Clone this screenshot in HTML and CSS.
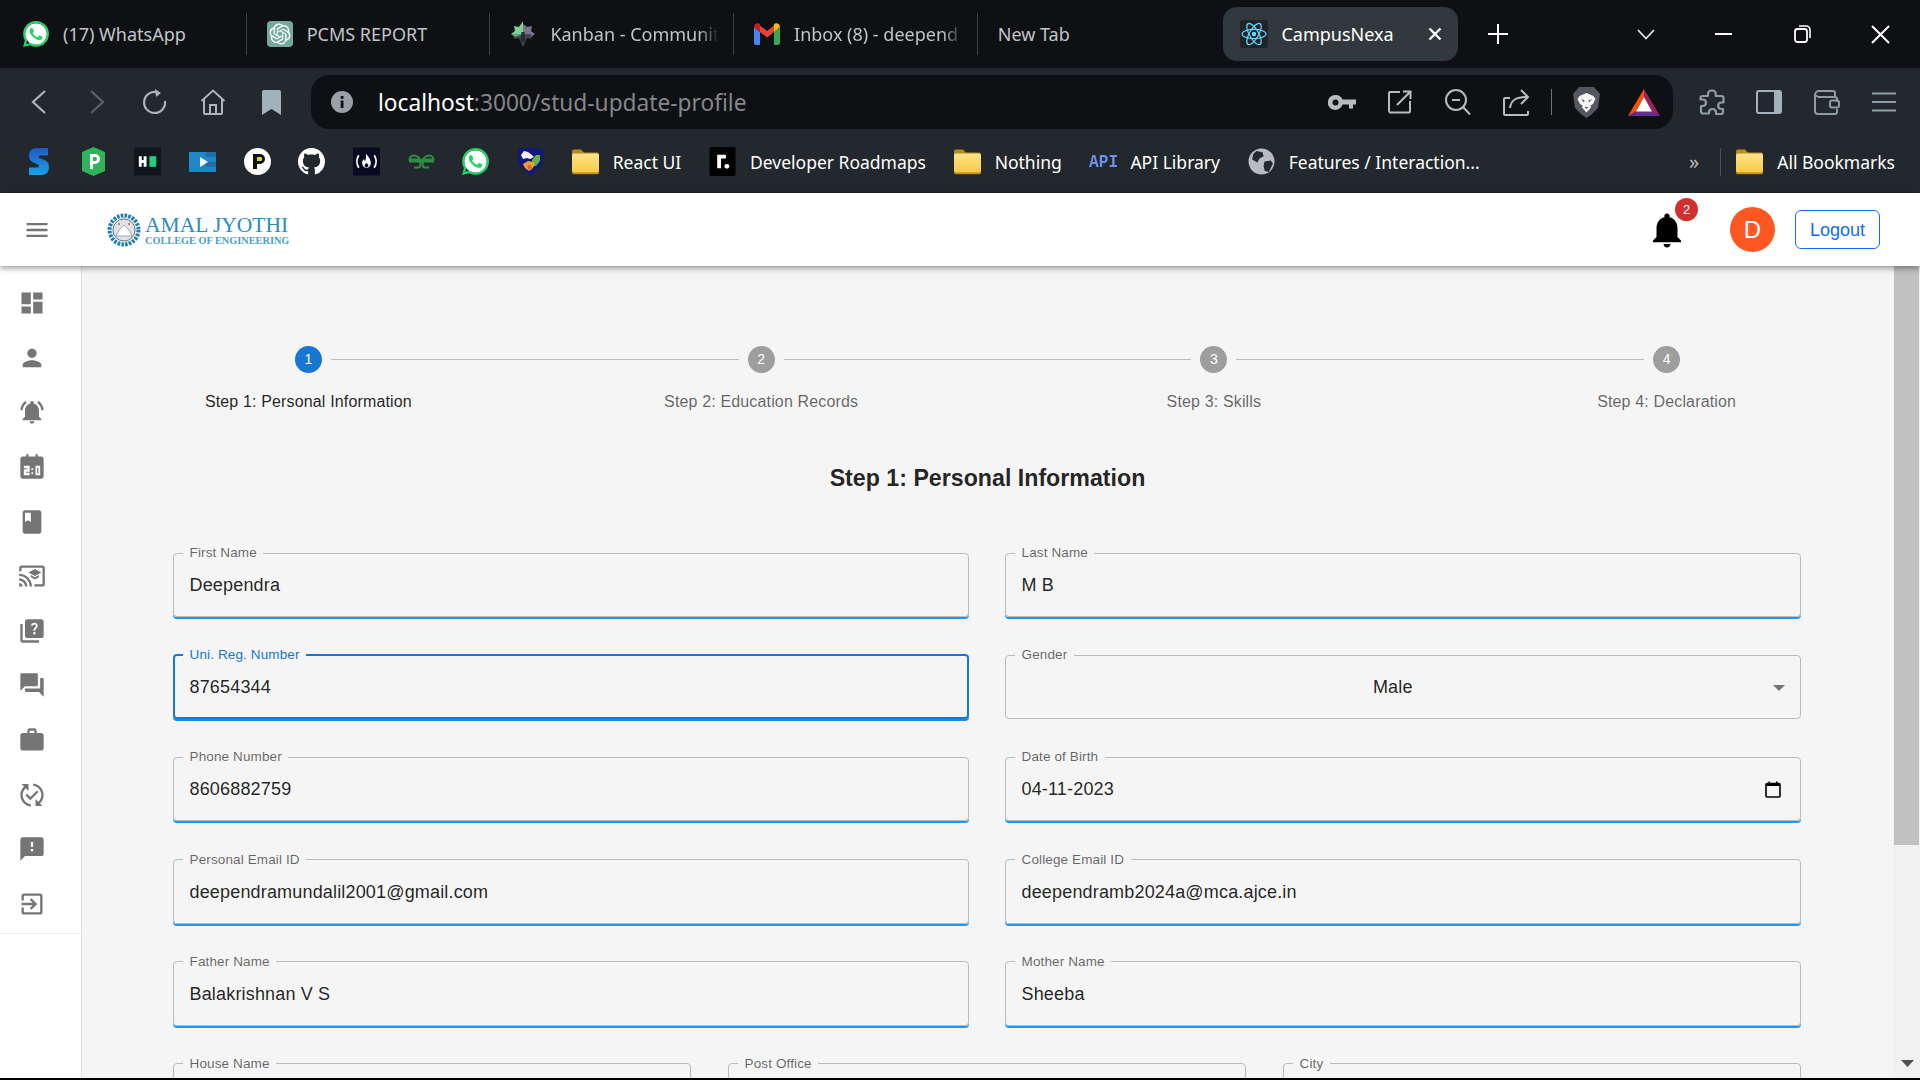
FILE: index.html
```html
<!DOCTYPE html>
<html lang="en">

<head>
    <meta charset="UTF-8">
    <meta name="viewport" content="width=device-width, initial-scale=1.0">
    <title>CampusNexa</title>
    <link rel="stylesheet" href="styles.css">
</head>

<body>

    <!-- browser tabs -->
    <div class="tabstrip">
        <div class="tab">
            <svg class="tab-icon" viewBox="0 0 24 24"><circle cx="12" cy="12" r="10" fill="#fff"/><path fill="#25d366" d="M17.472 14.382c-.297-.149-1.758-.867-2.03-.967-.273-.099-.471-.148-.67.15-.197.297-.767.966-.94 1.164-.173.199-.347.223-.644.075-.297-.15-1.255-.463-2.39-1.475-.883-.788-1.48-1.761-1.653-2.059-.173-.297-.018-.458.13-.606.134-.133.298-.347.446-.52.149-.174.198-.298.298-.497.099-.198.05-.371-.025-.52-.075-.149-.669-1.612-.916-2.207-.242-.579-.487-.5-.669-.51-.173-.008-.371-.01-.57-.01-.198 0-.52.074-.792.372-.272.297-1.04 1.016-1.04 2.479 0 1.462 1.065 2.875 1.213 3.074.149.198 2.096 3.2 5.077 4.487.709.306 1.262.489 1.694.625.712.227 1.36.195 1.871.118.571-.085 1.758-.719 2.006-1.413.248-.694.248-1.289.173-1.413-.074-.124-.272-.198-.57-.347m-5.421 7.403h-.004a9.87 9.87 0 01-5.031-1.378l-.361-.214-3.741.982.998-3.648-.235-.374a9.86 9.86 0 01-1.51-5.26c.001-5.45 4.436-9.884 9.888-9.884 2.64 0 5.122 1.03 6.988 2.898a9.825 9.825 0 012.893 6.994c-.003 5.45-4.437 9.884-9.885 9.884m8.413-18.297A11.815 11.815 0 0012.05 0C5.495 0 .16 5.335.157 11.892c0 2.096.547 4.142 1.588 5.945L.057 24l6.305-1.654a11.882 11.882 0 005.683 1.448h.005c6.554 0 11.89-5.335 11.893-11.893a11.821 11.821 0 00-3.48-8.413z"/></svg>
            <span class="tab-title">(17) WhatsApp</span>
            <i class="tab-sep"></i>
        </div>
        <div class="tab">
            <svg class="tab-icon" viewBox="0 0 26 26"><rect width="26" height="26" rx="4" fill="#74aa9c"/><g transform="translate(2.5 2.5) scale(.875)"><path fill="#fff" d="M22.2819 9.8211a5.9847 5.9847 0 0 0-.5157-4.9108 6.0462 6.0462 0 0 0-6.5098-2.9A6.0651 6.0651 0 0 0 4.9807 4.1818a5.9847 5.9847 0 0 0-3.9977 2.9 6.0462 6.0462 0 0 0 .7427 7.0966 5.98 5.98 0 0 0 .511 4.9107 6.051 6.051 0 0 0 6.5146 2.9001A5.9847 5.9847 0 0 0 13.2599 24a6.0557 6.0557 0 0 0 5.7718-4.2058 5.9894 5.9894 0 0 0 3.9977-2.9001 6.0557 6.0557 0 0 0-.7475-7.0729zm-9.022 12.6081a4.4755 4.4755 0 0 1-2.8764-1.0408l.1419-.0804 4.7783-2.7582a.7948.7948 0 0 0 .3927-.6813v-6.7369l2.02 1.1686a.071.071 0 0 1 .038.052v5.5826a4.504 4.504 0 0 1-4.4945 4.4944zm-9.6607-4.1254a4.4708 4.4708 0 0 1-.5346-3.0137l.142.0852 4.783 2.7582a.7712.7712 0 0 0 .7806 0l5.8428-3.3685v2.3324a.0804.0804 0 0 1-.0332.0615L9.74 19.9502a4.4992 4.4992 0 0 1-6.1408-1.6464zM2.3408 7.8956a4.485 4.485 0 0 1 2.3655-1.9728V11.6a.7664.7664 0 0 0 .3879.6765l5.8144 3.3543-2.0201 1.1685a.0757.0757 0 0 1-.071 0l-4.8303-2.7865A4.504 4.504 0 0 1 2.3408 7.872zm16.5963 3.8558L13.1038 8.364 15.1192 7.2a.0757.0757 0 0 1 .071 0l4.8303 2.7913a4.4944 4.4944 0 0 1-.6765 8.1042v-5.6772a.79.79 0 0 0-.407-.667zm2.0107-3.0231l-.142-.0852-4.7735-2.7818a.7759.7759 0 0 0-.7854 0L9.409 9.2297V6.8974a.0662.0662 0 0 1 .0284-.0615l4.8303-2.7866a4.4992 4.4992 0 0 1 6.6802 4.66zM8.3065 12.863l-2.02-1.1638a.0804.0804 0 0 1-.038-.0567V6.0742a4.4992 4.4992 0 0 1 7.3757-3.4537l-.142.0805L8.704 5.459a.7948.7948 0 0 0-.3927.6813zm1.0976-2.3654l2.602-1.4998 2.6069 1.4998v2.9994l-2.5974 1.4997-2.6067-1.4997Z"/></g></svg>
            <span class="tab-title">PCMS REPORT</span>
            <i class="tab-sep"></i>
        </div>
        <div class="tab">
            <svg class="tab-icon" viewBox="0 0 26 26"><path fill="#7d7590" d="M13 13V3l4 3 5-1-1 5 4 3-4 3z"/><path fill="#45454f" d="M13 13h8l1 5-5-1-4 9-4-9-5 1 1-5z"/><path fill="#7fcf8f" d="M13 13V0l-4 6-5-1 1 5-4 3h12z"/><path fill="#5fa774" d="M1 13l4 3 8-3z"/><path fill="#2b2b35" d="M11.500 11h3l1 9-2.500 2-2.500-2z"/></svg>
            <span class="tab-title tab-fade">Kanban - Communit</span>
            <i class="tab-sep"></i>
        </div>
        <div class="tab">
            <svg class="tab-icon" viewBox="0 0 26 22"><path fill="#4285f4" d="M0 4v16a2 2 0 0 0 2 2h4V9z"/><path fill="#34a853" d="M26 4v16a2 2 0 0 1-2 2h-4V9z"/><path fill="#ea4335" d="M6 9V2.500L13 8l7-5.500V9l-7 5.500z"/><path fill="#c5221f" d="M0 4c0-3 3.500-5 6-3v8z"/><path fill="#fbbc04" d="M26 4c0-3-3.500-5-6-3v8z"/></svg>
            <span class="tab-title tab-fade">Inbox (8) - deepend</span>
            <i class="tab-sep"></i>
        </div>
        <div class="tab">
            <span class="tab-title">New Tab</span>
        </div>
        <div class="tab-active">
            <svg class="tab-icon-big" viewBox="0 0 28 28"><rect width="28" height="28" rx="3" fill="#20232a"/><g fill="none" stroke="#61dafb" stroke-width="1.200"><ellipse cx="14" cy="14" rx="12" ry="4.600"/><ellipse cx="14" cy="14" rx="12" ry="4.600" transform="rotate(60 14 14)"/><ellipse cx="14" cy="14" rx="12" ry="4.600" transform="rotate(120 14 14)"/></g><circle cx="14" cy="14" r="2.200" fill="#61dafb"/></svg>
            <span class="tab-title-active">CampusNexa</span>
            <svg class="tab-close" viewBox="0 0 14 14"><path d="M1.500 1.500l11 11M12.500 1.500l-11 11" stroke="#fff" stroke-width="2.400"/></svg>
        </div>
        <div class="win-plus"><svg width="20" height="20" viewBox="0 0 20 20"><path d="M10 0v20M0 10h20" stroke="#fff" stroke-width="2"/></svg></div>
        <div class="win-chevron"><svg width="18" height="11" viewBox="0 0 18 11"><path d="M1 1l8 8.500L17 1" fill="none" stroke="#e3e3e3" stroke-width="1.800"/></svg></div>
        <div class="win-btn"><svg width="17" height="2" viewBox="0 0 17 2"><path d="M0 1h17" stroke="#fff" stroke-width="2"/></svg></div>
        <div class="win-btn"><svg width="17" height="18" viewBox="0 0 17 18"><rect x="1" y="4" width="12" height="13" rx="2.500" fill="none" stroke="#fff" stroke-width="1.800"/><path d="M5 1h7a4 4 0 0 1 4 4v8" fill="none" stroke="#fff" stroke-width="1.600"/></svg></div>
        <div class="win-btn"><svg width="19" height="19" viewBox="0 0 19 19"><path d="M1 1l17 17M18 1L1 18" stroke="#fff" stroke-width="2"/></svg></div>
    </div>

    <!-- address bar -->
    <div class="toolbar">
        <div class="nav-icons">
            <div class="tb-btn"><svg width="16" height="24" viewBox="0 0 16 24"><path d="M14 1L2 12l12 11" fill="none" stroke="#aab5bc" stroke-width="2.200"/></svg></div>
            <div class="tb-btn"><svg width="16" height="24" viewBox="0 0 16 24"><path d="M2 1l12 11L2 23" fill="none" stroke="#596369" stroke-width="2.200"/></svg></div>
            <div class="tb-btn"><svg width="26" height="26" viewBox="0 0 26 26"><path d="M16 3.500a10.500 10.500 0 1 0 7 8.500" fill="none" stroke="#aab5bc" stroke-width="2.200"/><path d="M13 0l6 4-5 4z" fill="#aab5bc"/></svg></div>
            <div class="tb-btn"><svg width="26" height="26" viewBox="0 0 26 26"><path d="M1.500 12L13 1.500 24.500 12M4 10v14a1 1 0 0 0 1 1h16a1 1 0 0 0 1-1V10M10 25v-9h6v9" fill="none" stroke="#aab5bc" stroke-width="2"/></svg></div>
            <div class="tb-btn"><svg width="19" height="25" viewBox="0 0 19 25"><path d="M2 0h15a2 2 0 0 1 2 2v23l-9.500-6L0 25V2a2 2 0 0 1 2-2z" fill="#a3b1bb"/></svg></div>
        </div>
        <div class="omnibox">
            <svg class="info-icon" viewBox="0 0 22 22"><circle cx="11" cy="11" r="11" fill="#9aa0a6"/><rect x="9.700" y="9.500" width="2.800" height="7.500" fill="#0e1014"/><rect x="9.700" y="5" width="2.800" height="2.800" fill="#0e1014"/></svg>
            <div class="url"><span class="url-host">localhost</span>:3000/stud-update-profile</div>
            <div class="omni-icons">
                <div class="tb-btn"><svg width="28" height="15" viewBox="0 0 28 15"><path fill-rule="evenodd" fill="#b9bcbf" d="M7.500 0a7.500 7.500 0 0 1 7 4.500H28v5h-3v4h-4v-4h-6.500A7.500 7.500 0 1 1 7.500 0zm0 4.500a3 3 0 1 0 0 6 3 3 0 0 0 0-6z"/></svg></div>
                <div class="tb-btn"><svg width="24" height="24" viewBox="0 0 24 24"><path d="M12 2H2a1 1 0 0 0-1 1v18a2 2 0 0 0 1 1.500h19a1 1 0 0 0 1-1V11M9 15L22 2M15 1.500h7.500V9" fill="none" stroke="#b9bcbf" stroke-width="2"/></svg></div>
                <div class="tb-btn"><svg width="26" height="26" viewBox="0 0 26 26"><circle cx="11" cy="11" r="10" fill="none" stroke="#b9bcbf" stroke-width="2"/><path d="M18 18l7 7.500M7 11h8" fill="none" stroke="#b9bcbf" stroke-width="2"/></svg></div>
                <div class="tb-btn"><svg width="27" height="27" viewBox="0 0 27 27"><path d="M7 9H2a1 1 0 0 0-1 1v15a1 1 0 0 0 1 1h22a1 1 0 0 0 1-1v-3M7 19c1-8 6-11 17-11M18 1l7 7-7 7" fill="none" stroke="#b9bcbf" stroke-width="2"/></svg></div>
                <i class="omni-sep"></i>
                <div class="tb-btn"><svg width="27" height="31" viewBox="0 0 27 31"><path fill="#55565f" d="M6 0h15l3 3.500L27 7l-2 14-7 7-4.500 3L9 28l-7-7L0 7l3-3.500z"/><path fill="#f5f5f5" d="M6.500 9L13.500 6l7 3 2 3-2.500 5-2.500 1.500.5 2-4.500 5-4.500-5 .5-2L7 17l-2.500-5z"/><path fill="#55565f" d="M8 12l3.500 1.500-.5 2zM19 12l-3.500 1.500.5 2zM11.500 20h4l-2 2z"/></svg></div>
                <div class="tb-btn"><svg width="32" height="27" viewBox="0 0 32 27"><path fill="#ff5000" d="M16 0L0 27l8-4.500L16 8z"/><path fill="#9e1f63" d="M16 0l16 27-8-4.500L16 8z"/><path fill="#662d91" d="M0 27h32l-8-5H8z"/><path fill="#fff" d="M16 8l8 14.500H8z"/></svg></div>
            </div>
        </div>
        <div class="ext-icons">
            <div class="tb-btn"><svg width="26" height="26" viewBox="0 0 26 26"><path d="M9 5.500C9 3 10.700 1.500 13 1.500s3.800 1.500 3.800 4V7h5.700a2 2 0 0 1 2 2v4.500h-1.800c-2 0-3.500 1.300-3.500 3.200s1.500 3.300 3.500 3.300h1.300v3a2 2 0 0 1-2 2h-5v-1.500c0-2-1.500-3.500-3.500-3.500S10 21 10 23v1.500H4a2 2 0 0 1-2-2V17h1.500c2 0 3.500-1.300 3.500-3.200S5.500 10.500 3.500 10.500H1.500V9a2 2 0 0 1 2-2H9z" fill="none" stroke="#8d9ca6" stroke-width="2.200" stroke-linejoin="round"/></svg></div>
            <div class="tb-btn"><svg width="26" height="24" viewBox="0 0 26 24"><rect x="1" y="1" width="24" height="22" rx="2" fill="none" stroke="#a3b1bb" stroke-width="2"/><rect x="18" y="1" width="7" height="22" fill="#a3b1bb"/></svg></div>
            <div class="tb-btn"><svg width="26" height="25" viewBox="0 0 26 25"><path d="M21 6V3a2 2 0 0 0-2-2H5a4 4 0 0 0-4 4v16a3 3 0 0 0 3 3h17a2 2 0 0 0 2-2v-3M2 5a3 3 0 0 0 3 2h16a2 2 0 0 1 2 2v3" fill="none" stroke="#8d9ca6" stroke-width="2"/><rect x="16" y="10.500" width="9" height="7" rx="2" fill="none" stroke="#8d9ca6" stroke-width="2"/></svg></div>
            <div class="tb-btn"><svg width="24" height="20" viewBox="0 0 24 20"><path d="M0 1.500h24M0 10h24M0 18.500h24" stroke="#8d9ca6" stroke-width="2"/></svg></div>
        </div>
    </div>

    <!-- bookmarks -->
    <div class="bookmarks">
        <div class="bm"><svg class="bm-icon" viewBox="0 0 27 29"><defs><linearGradient id="sFill" x1="0" y1="0" x2="0" y2="1"><stop offset="0" stop-color="#2257c9"/><stop offset="1" stop-color="#19a3e6"/></linearGradient></defs><path fill="url(#sFill)" d="M23 1H11C6 1 4 5 4 9c0 5 4 6.500 8 8 3 1 2.500 3.500-.5 3.500H4V28h12c6 0 8-4 8-8 0-6-4.500-7-8.500-8.500-3-1-2.500-3 .5-3H23z"/></svg></div>
        <div class="bm"><svg class="bm-icon" viewBox="0 0 27 29"><path fill="#2fb45a" d="M13.500 0L25 5v19l-11.500 5L2 24V5z"/><path fill="#fff" d="M10 7h5a5 5 0 0 1 0 10h-2v5h-3zm3 3v4h2a2 2 0 0 0 0-4z"/></svg></div>
        <div class="bm"><svg class="bm-icon" viewBox="0 0 28 29"><rect width="28" height="29" fill="#10151c"/><path fill="#fff" d="M5 9h3v4h2V9h3v11h-3v-4H8v4H5z"/><rect x="16" y="9" width="7" height="11" fill="#1fd176"/></svg></div>
        <div class="bm"><svg class="bm-icon" viewBox="0 0 27 29"><rect y="5" width="27" height="20" fill="#1d87c8"/><rect x="17" y="5" width="10" height="5" fill="#1c6fa8"/><rect x="17" y="15" width="10" height="5" fill="#1c6fa8"/><path fill="#fff" d="M11 10l8 5-8 5z"/></svg></div>
        <div class="bm"><svg class="bm-icon" viewBox="0 0 27 29"><circle cx="13.500" cy="14.500" r="13.500" fill="#fff"/><path fill="#111" d="M9 7h7a5 5 0 0 1 0 10h-3v5H9zm4 3v4h3a2 2 0 0 0 0-4z"/><path fill="#d6d72e" d="M13 10h3a2 2 0 0 1 0 4h-3z"/></svg></div>
        <div class="bm"><svg class="bm-icon" viewBox="0 0 16 16"><path fill="#fff" d="M8 0C3.580 0 0 3.580 0 8c0 3.540 2.290 6.530 5.470 7.590.4.070.55-.17.55-.38 0-.19-.01-.82-.01-1.490-2.010.37-2.530-.49-2.690-.94-.09-.23-.48-.94-.82-1.130-.28-.15-.68-.52-.01-.53.63-.01 1.080.58 1.230.82.72 1.210 1.870.87 2.330.67.07-.52.28-.87.51-1.070-1.780-.2-3.640-.89-3.640-3.950 0-.87.31-1.590.82-2.150-.08-.2-.36-1.020.08-2.120 0 0 .67-.21 2.200.82.64-.18 1.320-.27 2-.27.68 0 1.360.09 2 .27 1.530-1.040 2.200-.82 2.200-.82.44 1.100.16 1.920.08 2.120.51.56.82 1.270.82 2.150 0 3.070-1.870 3.750-3.650 3.950.29.25.54.73.54 1.480 0 1.070-.01 1.930-.01 2.200 0 .21.15.46.55.38A8.013 8.013 0 0016 8c0-4.420-3.580-8-8-8z"/></svg></div>
        <div class="bm"><svg class="bm-icon" viewBox="0 0 28 29"><rect width="28" height="29" fill="#0a0a23"/><path d="M6 8c-2.500 4-2.500 9 0 13M22 8c2.500 4 2.500 9 0 13" fill="none" stroke="#fff" stroke-width="1.800"/><path fill="#fff" fill-rule="evenodd" d="M14 7c3 4 4.500 6 4.500 9 0 3-2 5-4.500 5s-4.500-2-4.500-5c0-2 1-3 2-4 0 2 1 2 1.500 1 .5-2 .5-4 .5-6zm0 9c-1.500 1-2 2-2 3 0 .8 1 1.500 2 1.500s2-.7 2-1.500c0-1-.5-2-2-3z"/></svg></div>
        <div class="bm"><svg class="bm-icon" viewBox="0 0 27 29"><path d="M13.500 14.500C11 9.500 8 8.500 5.500 8.500 3 8.500 1.500 11 1.500 12.500h9c2.500 0 2.500 8 0 8H6M13.500 14.500c2.500-5 5.500-6 8-6 2.500 0 4 2.500 4 4h-9c-2.500 0-2.500 8 0 8H21M1 14.500h25" fill="none" stroke="#2f8d46" stroke-width="2"/></svg></div>
        <div class="bm"><svg class="bm-icon" viewBox="0 0 24 24"><circle cx="12" cy="12" r="10" fill="#fff"/><path fill="#25d366" d="M17.472 14.382c-.297-.149-1.758-.867-2.030-.967-.273-.099-.471-.148-.67.150-.197.297-.767.966-.94 1.164-.173.199-.347.223-.644.075-.297-.15-1.255-.463-2.390-1.475-.883-.788-1.480-1.761-1.653-2.059-.173-.297-.018-.458.130-.606.134-.133.298-.347.446-.52.149-.174.198-.298.298-.497.099-.198.050-.371-.025-.52-.075-.149-.669-1.612-.916-2.207-.242-.579-.487-.5-.669-.51-.173-.008-.371-.010-.57-.010-.198 0-.52.074-.792.372-.272.297-1.040 1.016-1.040 2.479 0 1.462 1.065 2.875 1.213 3.074.149.198 2.096 3.200 5.077 4.487.709.306 1.262.489 1.694.625.712.227 1.360.195 1.871.118.571-.085 1.758-.719 2.006-1.413.248-.694.248-1.289.173-1.413-.074-.124-.272-.198-.57-.347m-5.421 7.403h-.004a9.870 9.870 0 01-5.031-1.378l-.361-.214-3.741.982.998-3.648-.235-.374a9.860 9.860 0 01-1.510-5.260c.001-5.450 4.436-9.884 9.888-9.884 2.640 0 5.122 1.030 6.988 2.898a9.825 9.825 0 012.893 6.994c-.003 5.450-4.437 9.884-9.885 9.884m8.413-18.297A11.815 11.815 0 0012.050 0C5.495 0 .16 5.335.157 11.892c0 2.096.547 4.142 1.588 5.945L.057 24l6.305-1.654a11.882 11.882 0 005.683 1.448h.005c6.554 0 11.890-5.335 11.893-11.893a11.821 11.821 0 00-3.480-8.413z"/></svg></div>
        <div class="bm"><svg class="bm-icon" viewBox="0 0 27 29"><path fill="#10187a" d="M1 2l12.500-1.500L26 2v15L13.500 29 1 17z"/><path fill="#f2f2f2" d="M4 8l3-4 4 1 4 3 2 2-4 2-3-1-4 1z"/><path fill="#5fb548" d="M15 13l4-5 4 0 0 6-4 5-4-1z"/><path fill="#f0a030" d="M6 17l5-3 5 1 2 3-3 4-3 2-4-3z"/><path fill="#e0602f" d="M10 19l4-1 1 3-3 2z"/></svg></div>
        <div class="bm bm-text">
            <svg class="bm-icon" viewBox="0 0 27 26"><use href="#folder"/></svg>
            <span>React UI</span>
        </div>
        <div class="bm bm-text">
            <svg class="bm-icon" viewBox="0 0 27 30"><rect width="27" height="30" rx="2" fill="#000"/><path fill="#fff" d="M8 8h9v4h-5v10H8z"/><circle cx="18" cy="20" r="2.500" fill="#fff"/></svg>
            <span>Developer Roadmaps</span>
        </div>
        <div class="bm bm-text">
            <svg class="bm-icon" viewBox="0 0 27 26"><use href="#folder"/></svg>
            <span>Nothing</span>
        </div>
        <div class="bm bm-text">
            <span class="bm-api">API</span>
            <span>API Library</span>
        </div>
        <div class="bm bm-text">
            <svg class="bm-icon" viewBox="0 0 26 26"><circle cx="13" cy="13" r="12.500" fill="#b8bcc0"/><path fill="#22282d" d="M8 3l6 1 1 4-4 2-2 4-5-3 1-5zM16 13l6-1 2 3-4 8-4-1-1-5z"/></svg>
            <span>Features / Interaction...</span>
        </div>
        <div class="bm-more">»</div>
        <i class="bm-sep"></i>
        <div class="bm bm-text bm-all">
            <svg class="bm-icon" viewBox="0 0 27 26"><use href="#folder"/></svg>
            <span>All Bookmarks</span>
        </div>
    </div>

    <svg class="defs" width="0" height="0">
        <defs>
            <linearGradient id="folderFill" x1="0" y1="0" x2="0" y2="1"><stop offset="0" stop-color="#ffe48a"/><stop offset="1" stop-color="#f7c948"/></linearGradient>
            <symbol id="folder" viewBox="0 0 27 26"><path fill="#b98a1c" d="M0 3a2 2 0 0 1 2-2h7l3 3h13a2 2 0 0 1 2 2v18a2 2 0 0 1-2 2H2a2 2 0 0 1-2-2z"/><rect y="5" width="27" height="19" rx="2" fill="url(#folderFill)"/></symbol>
        </defs>
    </svg>

    <!-- the app -->
    <header class="app-header">
        <svg class="header-menu" viewBox="0 0 24 24"><path d="M3 18h18v-2H3v2zm0-5h18v-2H3v2zm0-7v2h18V6H3z"/></svg>
        <div class="logo">
            <svg class="logo-seal" viewBox="0 0 34 34"><circle cx="17" cy="17" r="14.500" fill="#e8eaec" stroke="#1b7fb5" stroke-width="4" stroke-dasharray="2.500 1.300"/><circle cx="17" cy="17" r="11" fill="#dfe3e6" stroke="#6a7f8c"/><path d="M9 23h16l-3-6-5-5-5 5z" fill="#fff" stroke="#8a96a0" stroke-width=".8"/><circle cx="12" cy="11" r="1" fill="#d9534f"/><circle cx="22" cy="11" r="1" fill="#d9534f"/></svg>
            <div class="logo-text">
                <div class="logo-name">AMAL JYOTHI</div>
                <div class="logo-sub">COLLEGE OF ENGINEERING</div>
            </div>
        </div>
        <div class="header-right">
            <div class="bell">
                <svg viewBox="0 0 24 24"><path d="M12 22c1.100 0 2-.9 2-2h-4c0 1.100.89 2 2 2zm6-6v-5c0-3.070-1.640-5.640-4.500-6.320V4c0-.83-.67-1.500-1.500-1.500s-1.500.67-1.500 1.500v.68C7.630 5.360 6 7.920 6 11v5l-2 2v1h16v-1l-2-2z"/></svg>
                <span class="bell-badge">2</span>
            </div>
            <div class="avatar">D</div>
            <button class="logout-btn">Logout</button>
        </div>
    </header>

    <div class="app-body">
        <nav class="sidebar">
            <div class="side-item"><svg viewBox="0 0 24 24"><path d="M3 13h8V3H3v10zm0 8h8v-6H3v6zm10 0h8V11h-8v10zm0-18v6h8V3h-8z"/></svg></div>
            <div class="side-item"><svg viewBox="0 0 24 24"><path d="M12 12c2.210 0 4-1.790 4-4s-1.790-4-4-4-4 1.790-4 4 1.790 4 4 4zm0 2c-2.670 0-8 1.340-8 4v2h16v-2c0-2.660-5.330-4-8-4z"/></svg></div>
            <div class="side-item"><svg viewBox="0 0 24 24"><path d="M7.580 4.080 6.150 2.650C3.750 4.480 2.170 7.300 2.030 10.500h2c.15-2.650 1.510-4.970 3.550-6.420zm12.390 6.420h2c-.15-3.200-1.730-6.020-4.120-7.850l-1.420 1.430c2.020 1.450 3.390 3.770 3.540 6.420zM18 11c0-3.070-1.640-5.640-4.500-6.320V4c0-.83-.67-1.500-1.500-1.500s-1.500.67-1.500 1.500v.68C7.630 5.360 6 7.920 6 11v5l-2 2v1h16v-1l-2-2v-5zm-6 11c.14 0 .27-.01.4-.04.65-.14 1.180-.58 1.440-1.180.1-.24.15-.5.15-.78h-4c.01 1.100.9 2 2.010 2z"/></svg></div>
            <div class="side-item"><svg viewBox="0 0 24 24"><path fill-rule="evenodd" d="M7 1h2v2h6V1h2v2h3c1.100 0 2 .9 2 2v15c0 1.100-.9 2-2 2H4c-1.100 0-2-.9-2-2V5c0-1.100.9-2 2-2h3zM5 11v2h3v1H5v5h5v-2H7v-1h3v-5zm6.500 2v1.500h1.500V13zm0 3.500V18h1.500v-1.500zM15 11v8h4v-8zm1.500 1.500h1v5h-1z"/></svg></div>
            <div class="side-item"><svg viewBox="0 0 24 24"><path d="M18 2H6c-1.100 0-2 .9-2 2v16c0 1.100.9 2 2 2h12c1.100 0 2-.9 2-2V4c0-1.100-.9-2-2-2zM6 4h5v8l-2.500-1.500L6 12V4z"/></svg></div>
            <div class="side-item"><svg viewBox="0 0 24 24"><path d="M21 3H3c-1.100 0-2 .9-2 2v3h2V5h18v14h-7v2h7c1.100 0 2-.9 2-2V5c0-1.100-.9-2-2-2zM1 18v3h3c0-1.660-1.340-3-3-3zm0-4v2c2.760 0 5 2.240 5 5h2c0-3.870-3.130-7-7-7zm0-4v2c4.970 0 9 4.030 9 9h2c0-6.080-4.930-11-11-11zm10 1.090v2L14.500 15l3.500-1.910v-2L14.500 13 11 11.090zM14.500 6 9 9l5.500 3L20 9l-5.500-3z"/></svg></div>
            <div class="side-item"><svg viewBox="0 0 24 24"><path d="M4 6H2v14c0 1.100.9 2 2 2h14v-2H4V6zm16-4H8c-1.100 0-2 .9-2 2v12c0 1.100.9 2 2 2h12c1.100 0 2-.9 2-2V4c0-1.100-.9-2-2-2zm-5.990 13c-.59 0-1.050-.47-1.050-1.050 0-.59.47-1.040 1.050-1.040.59 0 1.040.45 1.040 1.040-.01.58-.45 1.050-1.040 1.050zm2.500-6.170c-.63.93-1.230 1.210-1.560 1.810-.13.24-.18.4-.18 1.180h-1.520c0-.41-.06-1.080.26-1.650.41-.73 1.180-1.160 1.630-1.800.48-.68.21-1.940-1.140-1.940-.88 0-1.320.67-1.500 1.230l-1.370-.57C11.510 5.960 12.520 5 13.990 5c1.230 0 2.080.56 2.510 1.260.37.61.58 1.730.01 2.570z"/></svg></div>
            <div class="side-item"><svg viewBox="0 0 24 24"><path d="M21 6h-2v9H6v2c0 .55.45 1 1 1h11l4 4V7c0-.55-.45-1-1-1zm-4 6V3c0-.55-.45-1-1-1H3c-.55 0-1 .45-1 1v14l4-4h10c.55 0 1-.45 1-1z"/></svg></div>
            <div class="side-item"><svg viewBox="0 0 24 24"><path d="M20 6h-4V4c0-1.110-.89-2-2-2h-4c-1.110 0-2 .89-2 2v2H4c-1.110 0-1.990.89-1.990 2L2 19c0 1.110.89 2 2 2h16c1.110 0 2-.89 2-2V8c0-1.110-.89-2-2-2zm-6 0h-4V4h4v2z"/></svg></div>
            <div class="side-item"><svg viewBox="0 0 24 24"><path d="M17.660 9.530l-7.070 7.070-4.240-4.240 1.410-1.410 2.830 2.830 5.660-5.660 1.410 1.410zM4 12c0-2.330 1.020-4.420 2.620-5.880L9 8.500v-6H3l2.200 2.200C3.240 6.520 2 9.110 2 12c0 5.190 3.950 9.450 9 9.950v-2.020C7.060 19.440 4 16.070 4 12zm18 0c0-5.190-3.950-9.450-9-9.950v2.020c3.940.49 7 3.860 7 7.930 0 2.330-1.020 4.420-2.620 5.880L15 15.500v6h6l-2.200-2.200c1.960-1.820 3.200-4.410 3.200-7.300z"/></svg></div>
            <div class="side-item"><svg viewBox="0 0 24 24"><path d="M20 2H4c-1.100 0-1.990.9-1.990 2L2 22l4-4h14c1.100 0 2-.9 2-2V4c0-1.100-.9-2-2-2zm-7 12h-2v-2h2v2zm0-4h-2V6h2v4z"/></svg></div>
            <div class="side-item"><svg viewBox="0 0 24 24"><path d="M10.090 15.590 11.500 17l5-5-5-5-1.410 1.410L12.670 11H3v2h9.670l-2.580 2.590zM19 3H5c-1.110 0-2 .9-2 2v4h2V5h14v14H5v-4H3v4c0 1.100.89 2 2 2h14c1.100 0 2-.9 2-2V5c0-1.100-.9-2-2-2z"/></svg></div>
            <div class="side-end"></div>
        </nav>

        <main class="content">
            <div class="stepper">
                <div class="step step-on">
                    <div class="step-head"><i class="step-line step-line-none"></i><span class="step-dot">1</span><i class="step-line"></i></div>
                    <div class="step-label">Step 1: Personal Information</div>
                </div>
                <div class="step">
                    <div class="step-head"><i class="step-line"></i><span class="step-dot">2</span><i class="step-line"></i></div>
                    <div class="step-label">Step 2: Education Records</div>
                </div>
                <div class="step">
                    <div class="step-head"><i class="step-line"></i><span class="step-dot">3</span><i class="step-line"></i></div>
                    <div class="step-label">Step 3: Skills</div>
                </div>
                <div class="step">
                    <div class="step-head"><i class="step-line"></i><span class="step-dot">4</span><i class="step-line step-line-none"></i></div>
                    <div class="step-label">Step 4: Declaration</div>
                </div>
            </div>

            <h2 class="form-title">Step 1: Personal Information</h2>

            <form class="form-grid">
                <fieldset class="field"><legend>First Name</legend><input value="Deependra"></fieldset>
                <fieldset class="field"><legend>Last Name</legend><input value="M B"></fieldset>

                <fieldset class="field field-focus"><legend>Uni. Reg. Number</legend><input value="87654344"></fieldset>
                <fieldset class="field field-plain"><legend>Gender</legend>
                    <div class="select-value">Male</div>
                    <svg class="select-arrow" viewBox="0 0 12 6"><path d="M0 0h12L6 6z"/></svg>
                </fieldset>

                <fieldset class="field"><legend>Phone Number</legend><input value="8606882759"></fieldset>
                <fieldset class="field"><legend>Date of Birth</legend><input value="04-11-2023">
                    <svg class="date-icon" viewBox="0 0 16 17"><rect x="1" y="2.500" width="14" height="13.500" rx="1" fill="none" stroke="#000" stroke-width="1.600"/><path d="M1 2h14v3H1zM3.500 0.500h1.500v2H3.500zM11 0.500h1.500v2H11z"/></svg>
                </fieldset>

                <fieldset class="field"><legend>Personal Email ID</legend><input value="deependramundalil2001@gmail.com"></fieldset>
                <fieldset class="field"><legend>College Email ID</legend><input value="deependramb2024a@mca.ajce.in"></fieldset>

                <fieldset class="field"><legend>Father Name</legend><input value="Balakrishnan V S"></fieldset>
                <fieldset class="field"><legend>Mother Name</legend><input value="Sheeba"></fieldset>

                <div class="form-row-3">
                    <fieldset class="field"><legend>House Name</legend></fieldset>
                    <fieldset class="field"><legend>Post Office</legend></fieldset>
                    <fieldset class="field"><legend>City</legend></fieldset>
                </div>
            </form>
        </main>

        <div class="scrollbar">
            <div class="scroll-thumb"></div>
            <svg class="scroll-down" viewBox="0 0 13 7"><path d="M0 0h13L6.500 7z"/></svg>
        </div>
    </div>

    <div class="screen-edge"></div>

</body>

</html>
```

FILE: styles.css
```css
* {
    box-sizing: border-box;
}

html,
body {
    height: 100%;
}

body {
    margin: 0;
    display: flex;
    flex-direction: column;
    overflow: hidden;
    font-family: 'Liberation Sans', Arial, sans-serif;
    background-color: #f5f5f5;
}

i {
    display: block;
}

.defs {
    position: absolute;
}

/* tabs */
.tabstrip {
    height: 68px;
    flex: none;
    display: flex;
    align-items: center;
    padding-left: 3px;
    background-color: #0e1014;
    font-family: 'Noto Sans', sans-serif;
    font-size: 18px;
}

.tab {
    width: 243.7px;
    height: 42px;
    flex: none;
    display: flex;
    align-items: center;
    gap: 14px;
    padding-left: 20px;
    color: #c2c5c7;
}

.tab-icon {
    width: 26px;
    height: 26px;
    flex: none;
}

.tab-title {
    flex: 1;
    min-width: 0;
    white-space: nowrap;
}

.tab-fade {
    -webkit-mask-image: linear-gradient(to right, #000 88%, transparent 100%);
    mask-image: linear-gradient(to right, #000 88%, transparent 100%);
}

.tab-sep {
    width: 1px;
    height: 42px;
    flex: none;
    background-color: #3a3f44;
}

.tab-active {
    width: 235px;
    height: 54px;
    flex: none;
    margin-left: 2px;
    display: flex;
    align-items: center;
    padding: 0 16px 0 17px;
    gap: 13px;
    border-radius: 14px;
    background-color: #32393e;
    color: #fff;
}

.tab-icon-big {
    width: 28px;
    height: 28px;
    flex: none;
}

.tab-title-active {
    flex: 1;
    white-space: nowrap;
}

.tab-close {
    width: 14px;
    height: 14px;
    flex: none;
}

.win-plus {
    width: 40px;
    margin-left: 20px;
    display: flex;
    justify-content: center;
}

.win-chevron {
    width: 40px;
    margin-left: auto;
    margin-right: 18px;
    display: flex;
    justify-content: center;
}

.win-btn {
    width: 78.67px;
    display: flex;
    justify-content: center;
}

/* address bar */
.toolbar {
    height: 67px;
    flex: none;
    display: flex;
    align-items: center;
    padding: 1px 0 0 10px;
    background-color: #22282d;
}

.nav-icons,
.ext-icons,
.omni-icons {
    display: flex;
    align-items: center;
}

.tb-btn {
    width: 58px;
    flex: none;
    display: flex;
    justify-content: center;
    align-items: center;
}

.ext-icons {
    margin-left: 10px;
}

.ext-icons .tb-btn {
    width: 57.5px;
}

.omnibox {
    width: 1362px;
    height: 54px;
    margin-left: 11px;
    display: flex;
    align-items: center;
    padding-left: 20px;
    border-radius: 18px;
    background-color: #0e1014;
}

.info-icon {
    width: 22px;
    height: 22px;
    flex: none;
}

.url {
    margin-left: 25px;
    font-family: 'Noto Sans', sans-serif;
    font-size: 22.7px;
    color: #85878a;
}

.url-host {
    color: #fff;
}

.omni-icons {
    margin-left: auto;
}

.omni-sep {
    width: 1px;
    height: 26px;
    margin: 0 5px 0 6px;
    background-color: #6d7276;
}

/* bookmarks */
.bookmarks {
    height: 58px;
    flex: none;
    display: flex;
    align-items: center;
    padding: 0 11px 5px;
    background-color: #22282d;
    font-family: 'Noto Sans', sans-serif;
    font-size: 17.5px;
    color: #fff;
}

.bm {
    flex: none;
    display: flex;
    align-items: center;
    gap: 14px;
    padding: 0 13.85px;
}

.bm-icon {
    width: 27px;
    height: 29px;
    flex: none;
}

.bm-api {
    width: 27px;
    font-family: 'Liberation Mono', monospace;
    font-weight: bold;
    font-size: 19px;
    color: #6e8fe8;
    white-space: nowrap;
    transform: scaleX(.85);
    transform-origin: left;
}

.bm-more {
    margin-left: auto;
    margin-right: 21px;
    font-size: 20px;
    color: #b9bcbf;
}

.bm-sep {
    width: 1px;
    height: 28px;
    background-color: #4a5056;
}

.bm-all {
    padding-left: 15px;
    padding-right: 14px;
}

/* app header */
.app-header {
    height: 73px;
    flex: none;
    position: relative;
    z-index: 2;
    display: flex;
    align-items: center;
    padding-left: 23px;
    background-color: #fff;
    box-shadow: 0 2px 4px -1px rgba(0, 0, 0, .2), 0 4px 5px rgba(0, 0, 0, .14), 0 1px 10px rgba(0, 0, 0, .12);
}

.header-menu {
    width: 28px;
    height: 28px;
    fill: #757575;
}

.logo {
    margin-left: 56px;
    display: flex;
    align-items: center;
    gap: 4px;
}

.logo-seal {
    width: 34px;
    height: 34px;
}

.logo-text {
    padding-top: 2px;
    font-family: 'Liberation Serif', serif;
    color: #2b8cbe;
}

.logo-name {
    font-size: 21.5px;
    line-height: 20px;
    white-space: nowrap;
}

.logo-sub {
    font-size: 10.3px;
    line-height: 11px;
    font-weight: bold;
    white-space: nowrap;
    color: #4a9fc9;
}

.header-right {
    margin-left: auto;
    display: flex;
    align-items: center;
    padding-right: 40px;
}

.bell {
    position: relative;
    width: 42px;
    height: 42px;
}

.bell svg {
    width: 42px;
    height: 42px;
    display: block;
}

.bell-badge {
    position: absolute;
    top: -11px;
    right: -10px;
    width: 23px;
    height: 23px;
    border-radius: 50%;
    background-color: #d32f2f;
    color: #fff;
    font-size: 13px;
    line-height: 23px;
    text-align: center;
}

.avatar {
    width: 45px;
    height: 45px;
    margin-left: 42px;
    border-radius: 50%;
    background-color: #ff5722;
    color: #fff;
    font-size: 24px;
    line-height: 45px;
    text-align: center;
}

.logout-btn {
    width: 85px;
    height: 39px;
    margin-left: 20px;
    padding: 2px 0 0;
    border: 1px solid #0d6efd;
    border-radius: 6px;
    background-color: #fff;
    color: #0d6efd;
    font-family: inherit;
    font-size: 18px;
}

/* below the header */
.app-body {
    flex: 1;
    min-height: 0;
    display: flex;
}

.sidebar {
    width: 82px;
    flex: none;
    padding-top: 10px;
    background-color: #fff;
    border-right: 1px solid #e0e0e0;
}

.side-item {
    height: 54.6px;
    display: flex;
    align-items: center;
    padding-left: 18px;
}

.side-item svg {
    width: 28px;
    height: 28px;
    fill: #757575;
}

.side-end {
    border-top: 1px solid #eee;
    margin-top: 2px;
}

.content {
    flex: 1;
    min-width: 0;
    overflow: hidden;
    padding-top: 80px;
}

.stepper {
    display: grid;
    grid-template-columns: repeat(4, 1fr);
}

.step-head {
    display: flex;
    align-items: center;
    gap: 9px;
}

.step-line {
    flex: 1;
    height: 1px;
    background-color: #bdbdbd;
}

.step-line-none {
    background-color: transparent;
}

.step-dot {
    width: 27px;
    height: 27px;
    flex: none;
    border-radius: 50%;
    background-color: #9e9e9e;
    color: #fff;
    font-size: 14px;
    line-height: 27px;
    text-align: center;
}

.step-on .step-dot {
    background-color: #1976d2;
}

.step-label {
    margin-top: 17px;
    font-size: 16px;
    line-height: 24px;
    letter-spacing: .15px;
    text-align: center;
    color: rgba(0, 0, 0, .6);
}

.step-on .step-label {
    color: rgba(0, 0, 0, .87);
}

.form-title {
    margin: 50px 0 53px;
    font-size: 23.2px;
    line-height: 28px;
    text-align: center;
    color: rgba(0, 0, 0, .87);
}

/* form */
.form-grid {
    display: grid;
    grid-template-columns: 1fr 1fr;
    column-gap: 36px;
    row-gap: 30.2px;
    margin: 0 92px 0 91px;
}

.form-row-3 {
    grid-column: 1 / -1;
    display: grid;
    grid-template-columns: repeat(3, 1fr);
    column-gap: 37px;
}

.field {
    height: 72px;
    min-width: 0;
    margin: 0;
    padding: 0 16px 6px 15.5px;
    display: flex;
    align-items: center;
    border: 1px solid #bbb;
    border-radius: 4px;
    box-shadow: 0 2px 0 #2196f3;
}

.field legend {
    margin-left: -6.500px;
    padding: 0 6.5px;
    font-size: 13.5px;
    line-height: 16px;
    letter-spacing: .13px;
    color: rgba(0, 0, 0, .6);
}

.field input {
    flex: 1;
    min-width: 0;
    width: 100%;
    padding: 0;
    border: 0;
    outline: 0;
    background: transparent;
    font-family: inherit;
    font-size: 18px;
    letter-spacing: .17px;
    color: rgba(0, 0, 0, .87);
}

.field-focus {
    border: 2px solid #1976d2;
    box-shadow: 0 2px 0 #1e88e5;
    padding-left: 14.5px;
}

.field-focus legend {
    margin-left: -6.500px;
    color: #1976d2;
}

.field-plain {
    box-shadow: none;
}

.select-value {
    flex: 1;
    padding-right: 9px;
    text-align: center;
    font-size: 18px;
    letter-spacing: .17px;
    color: rgba(0, 0, 0, .87);
}

.select-arrow {
    width: 12px;
    height: 6px;
    flex: none;
    margin-right: -1px;
    fill: #757575;
}

.date-icon {
    width: 16px;
    height: 17px;
    flex: none;
    margin-right: 3px;
}

/* page scrollbar */
.scrollbar {
    width: 27px;
    flex: none;
    display: flex;
    flex-direction: column;
    align-items: center;
    padding-left: 1px;
    background-color: #f1f1f1;
}

.scroll-thumb {
    width: 25px;
    height: 579px;
    margin-right: 1px;
    background-color: #c1c1c1;
}

.scroll-down {
    width: 13px;
    height: 7px;
    margin-top: auto;
    margin-bottom: 11px;
    fill: #505050;
}

.screen-edge {
    height: 2px;
    flex: none;
    background-color: #000;
}
```
